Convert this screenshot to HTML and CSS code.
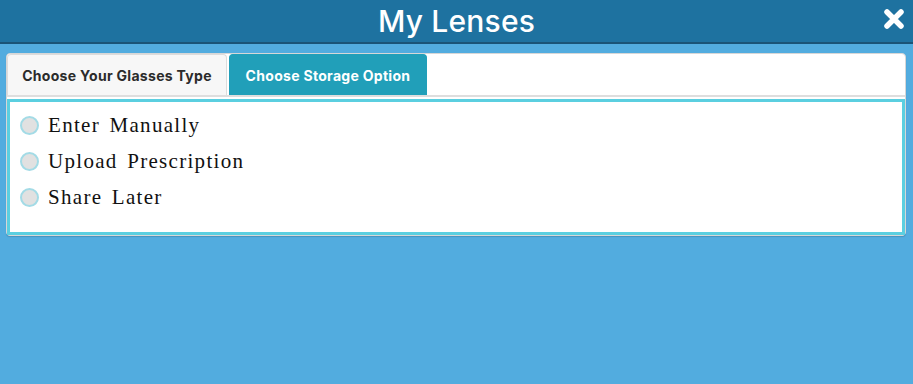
FILE: index.html
```html
<!DOCTYPE html>
<html>
<head>
<meta charset="utf-8">
<link rel="stylesheet" href="styles.css">
</head>
<body>
<header class="top">
  <h1 class="title">My Lenses</h1>
  <span class="close">
    <svg width="22" height="22" viewBox="0 0 22 22"><path d="M4 4 L18 18 M18 4 L4 18" stroke="#fff" stroke-width="5.5" stroke-linecap="round"/></svg>
  </span>
</header>
<main class="wrap">
  <section class="card">
    <nav class="tabs">
      <div class="tab">Choose Your Glasses Type</div>
      <div class="tab active">Choose Storage Option</div>
    </nav>
    <div class="panel">
      <label class="opt"><span class="radio"></span><span class="lbl">Enter Manually</span></label>
      <label class="opt"><span class="radio"></span><span class="lbl">Upload Prescription</span></label>
      <label class="opt"><span class="radio"></span><span class="lbl">Share Later</span></label>
    </div>
  </section>
</main>
</body>
</html>
```
FILE: styles.css
```css
html, body { margin: 0; padding: 0; }
body { background: #52acdf; width: 913px; height: 384px; overflow: hidden; }
.top {
  height: 42px;
  background: #1e72a0;
  border-bottom: 2px solid #1a5477;
  display: flex;
  align-items: center;
  justify-content: center;
  position: relative;
}
.title {
  margin: 0;
  font-family: "Inter", "Open Sans", sans-serif;
  font-weight: 500;
  font-size: 30px;
  color: #fff;
  letter-spacing: 0.2px;
}
.close { position: absolute; right: 8px; top: 8px; width: 22px; height: 22px; }
.wrap { padding: 9px 7px 0 6px; }
.card {
  background: #fff;
  border: 1px solid #d7d7d7;
  border-radius: 4px;
  box-shadow: 0 1px 1px rgba(0,0,0,0.15);
}
.tabs {
  display: flex;
  gap: 2px;
  height: 41px;
  border-bottom: 2px solid #dedede;
  padding-left: 0;
}
.tab {
  width: 220px;
  display: flex;
  align-items: center;
  justify-content: center;
  font-family: "Inter", "Open Sans", sans-serif;
  font-weight: 700;
  font-size: 14px;
  letter-spacing: 0.3px;
  color: #2b2b2b;
  background: #f7f7f7;
  border: 1px solid #dcdcdc;
  border-bottom: 0;
  border-radius: 4px 4px 0 0;
  box-sizing: border-box;
}
.tab.active {
  width: 198px;
  background: #219fb9;
  color: #fff;
  border-color: #219fb9;
}
.panel {
  margin-top: 2px;
  border: 3px solid #5bcfe0;
  padding: 11px 10px 23px;
  display: flex;
  flex-direction: column;
  gap: 12px;
}
.opt { display: flex; align-items: center; height: 24px; }
.radio {
  width: 15px; height: 15px;
  border-radius: 50%;
  background: #e1e1e1;
  border: 2px solid #a3dbe6;
  margin-right: 9px;
  flex: none;
}
.lbl {
  font-family: "Liberation Serif", "Times New Roman", serif;
  font-size: 21px;
  letter-spacing: 1.3px;
  word-spacing: 3px;
  color: #111;
}
```
